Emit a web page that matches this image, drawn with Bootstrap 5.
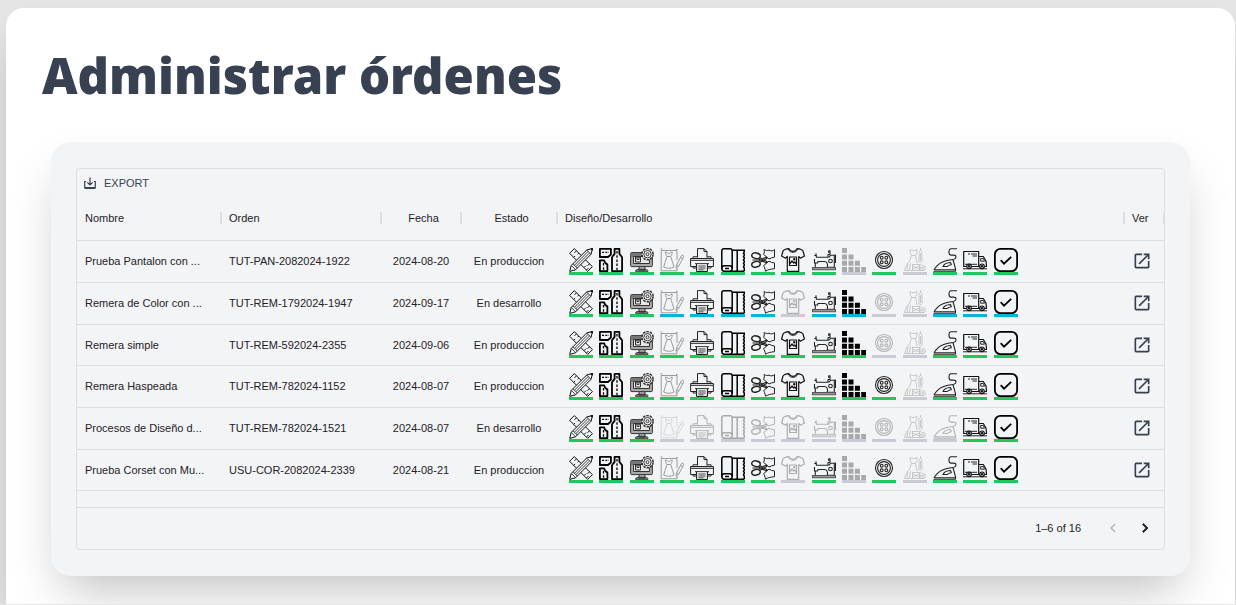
<!DOCTYPE html>
<html lang="es">
<head>
<meta charset="utf-8">
<meta name="viewport" content="width=device-width, initial-scale=1">
<title>Administrar órdenes</title>
<link href="https://cdn.jsdelivr.net/npm/bootstrap@5.3.0/dist/css/bootstrap.min.css" rel="stylesheet">
<style>
  body { background: #e6e6e6; font-family: "Liberation Sans", Arial, sans-serif; }
  .page-panel { background: #fff; border-radius: 18px 18px 0 0; margin: 8px 1px 0 6px; padding: 40px 45px 28px; box-shadow: 0 25px 50px -12px rgba(0,0,0,.25); }
  .page-title { font-family: "Noto Sans", "Open Sans", sans-serif; font-weight: 900; font-size: 49px; line-height: 54px; color: #374151; margin: 0 0 40px -9px; }
  .orders-panel { background: #f3f4f6; border-radius: 20px; padding: 26px 25px; box-shadow: 0 25px 50px -12px rgba(0,0,0,.25); }
  .orders-grid { border: 1px solid #dcdee1; border-radius: 4px; font-size: 11px; line-height: 16px; color: #1f2226; overflow: hidden; }
  .grid-tools { height: 28px; padding: 0 6px; }
  .export-btn { font-size: 11px; line-height: 16px; gap: 7px; }
  .orders-table { width: 100%; table-layout: fixed; border-collapse: collapse; }
  .orders-table th { position: relative; height: 43px; padding: 0 8px; font-weight: 400; border-bottom: 1px solid #dcdee1; }
  .orders-table th::after { content: ""; position: absolute; right: -1px; top: 15px; width: 2px; height: 12px; background: #dcdee1; }
  .orders-table th.text-center { padding-left: 13px; }
  .orders-table td { height: 42px; padding: 0 8px; border-bottom: 1px solid #dcdee1; white-space: nowrap; }
  .orders-table tbody tr:nth-child(3n) td { height: 41px; }
  .col-name { width: 144px; } .col-order { width: 160px; } .col-date { width: 80px; } .col-state { width: 96px; } .col-view { width: 40px; }
  .steps { width: 449px; margin-left: 4px; }
  .step { width: 24px; border-bottom: 3px solid #c9cad3; }
  .step svg { display: block; width: 24px; height: 24px; opacity: .3; }
  .step-done { border-color: #22c55e; } .step-active { border-color: #06b6d4; }
  .step-done svg, .step-active svg { opacity: 1; }
  .plain-btn { border: 0; background: none; padding: 0; color: #374151; }
  .plain-btn svg { display: block; }
  .grid-gap { height: 16px; }
  .grid-foot { height: 42px; border-top: 1px solid #dcdee1; padding-right: 3px; }
  .pager-btn { width: 32px; height: 32px; color: #222; }
  .pager-btn:disabled { color: #b4b6b9; }
</style>
</head>
<body>

<svg class="d-none" aria-hidden="true">
  <defs>
  <symbol id="i-design" viewBox="0 0 24 24"><g fill="#f3f4f6" stroke="#111" stroke-linejoin="round">
    <path d="M5.3.6.6 5.3l18.100 18.100 4.700-4.700z"/><path d="m7.500 2.800-2 2M9.800 5.100 8.600 6.300M4.700 9.400l1.400-1.400M15 19.600l2-2M17.500 22l2-2M20.500 15.800l-2 2"/>
    <path d="M23.600.4 22 6.300 6.600 21.800.7 23.400l1.500-5.900L17.700 2z"/><path d="m2.300 17.400 4.300 4.300M4 15.800l4.300 4.300M17.700 2l4.300 4.300M5.500 17.200 19 3.500M6.900 18.600 20.500 5" stroke-width=".8"/>
    <path d="m21.800.9 1.300 1.300.6-1.900z" fill="#111"/></g></symbol>
  <symbol id="i-pattern" viewBox="0 0 24 24"><g fill="none" stroke="#000" stroke-width="1.8" stroke-linejoin="round">
    <path d="M.9.9h11v5.600L9 9H.9z"/><path d="M.9 12.300h4.300c.2 2.500 1 3.400 3.200 4v6.800H.9z"/><path d="M15.600.9h4.800v5l2.700 3.400v13.800H13V9.300l2.600-3.400z"/>
    <path d="M3 4.300h7" stroke-width="1.300" stroke-dasharray="2 1.300"/><path d="M4.500 15v8M18 3v20" stroke-width="1.300" stroke-dasharray="2.500 1.700"/></g></symbol>
  <symbol id="i-digital" viewBox="0 0 24 24"><g fill="none" stroke="#333">
    <rect x=".6" y="4.600" width="21.800" height="14" rx="1.200" fill="#aaa"/><path d="M1 5.500h12v3H1z" fill="#777" stroke="#777"/><path d="M3.500 8.500h16v7h-16z" fill="#e6e7e9"/><path d="M5.500 9h5v5h-5zM7 9v2.500h2V9"/>
    <path d="M9 19v3h6v-3M5.500 23.300h12.500c0-1.300-1-1.700-2.500-1.700H8c-1.500 0-2.500.4-2.500 1.700z" fill="#999"/>
    <circle cx="17.500" cy="6.200" r="5.600" fill="#f3f4f6" stroke-width="1.500" stroke-dasharray="2.500 1"/><circle cx="17.500" cy="6.200" r="3.700"/><circle cx="17.500" cy="6.200" r="1.500"/></g></symbol>
  <symbol id="i-sketch" viewBox="0 0 24 24"><g fill="none" stroke="#8f9194" stroke-width=".9" stroke-linejoin="round">
    <path d="M17 12V2.500H1.200v20.300H17v-3M.5 1h2M16 1.500h1.500"/><path d="M5.500 4c0 2 .5 3 1.500 4.500C6 12 4.500 15.500 3.700 19c3 1.700 7.300 1.700 10.300 0-.8-3.500-2.300-7-3.300-10.500 1-1.500 1.500-2.500 1.500-4.500l-1.700.5C9.500 6 8 6 7.200 4.500zM7 8.500h3.700"/>
    <path d="m16 20.300.5-3.300 5-9.500c.8-1 2.700 0 2.200 1.300l-5 9.500zM17 17l1.700 1.200M20.500 9.500l2 1.200"/></g></symbol>
  <symbol id="i-print" viewBox="0 0 24 24"><g fill="none" stroke="#222" stroke-linejoin="round">
    <path d="M7.500 9.500V.6H14l3 3v5.900M14 .6v3h3"/><path d="M3 10.500V8.800h4M17 8.800h4v1.700"/><path d="M6 18.500H.6v-8h22.800v8H18M3 18.500v1.500h3M18 20h3v-1.500"/><path d="M1 12.300h22M5 15.700h14"/><path d="M6.500 16v7.500h11V16" fill="#dcdde0"/><path d="M8.500 18h7M8.500 20h7M8.500 21.800h5" stroke="#555"/></g></symbol>
  <symbol id="i-fabric" viewBox="0 0 24 24"><g fill="none" stroke="#000" stroke-width="1.500" stroke-linejoin="round">
    <path d="M.8 21V3C.8 1.500 1.800.8 3 .8h6c1.400 0 2.200.8 2.200 2.200V21"/><rect x=".8" y="17.800" width="10.400" height="5.500" rx="2.500"/><path d="M4 20.500h4"/>
    <path d="M11.500 2.300H24M9 23.300h14.500M16.200 2.300v21M22.500 2.300c2 1.300 0 2 0 3.200 2 1 0 2.300 0 3.400 2 1 0 2.300 0 3.400 2 1 0 2.300 0 3.400 2 1 0 2.300 0 3.400 2 1 0 2.500 1 4.200"/></g></symbol>
  <symbol id="i-cut" viewBox="0 0 24 24"><g fill="none" stroke="#222" stroke-linejoin="round">
    <ellipse cx="5" cy="7.700" rx="4.300" ry="2.800" transform="rotate(12 5 7.700)" stroke-width="1.400"/><ellipse cx="5" cy="16.300" rx="4.300" ry="2.800" transform="rotate(-12 5 16.300)" stroke-width="1.400"/>
    <path d="m8.500 9.500 7.500 4.300-1 1-7-3.500M8.500 14.500l7.500-4.300-1-1-7 3.500M1.500 12H8" stroke-width="1.200"/>
    <path d="M12.500 6.300c1-1.600 1-3 .5-4.800 2 1.200 3.500 1.300 5 .7 2.200 1 4 1 5.500-.7v7.700c-2 .3-3.700.8-5.500 1.800z"/><path d="M12.500 17.700c1 1.300 1.500 2.700 2 5.500 2.500-1.500 4.500-2 9-2.500V15c-2-.3-3.700-.8-5.500-1.800z"/></g></symbol>
  <symbol id="i-shirt" viewBox="0 0 24 24"><g fill="none" stroke="#111" stroke-width="1.200" stroke-linejoin="round">
    <path d="M8 .7C5 1 3 1.500 2 3L.6 8l4 2.200 1.700-1.700v14.900h11.400V8.500l1.700 1.700 4-2.200L22 3c-1-1.500-3-2-6-2.300-1.500 3.500-6.500 3.500-8 0z"/><path d="M7 1c2 4.700 8 4.700 10 0" stroke-width=".7"/>
    <path d="M8.500 9h7v8.500h-7zM8.500 16l2.500-3 1.700 2 1-1 1.700 2"/><circle cx="13.200" cy="11.200" r=".6"/></g></symbol>
  <symbol id="i-sew" viewBox="0 0 24 24"><g fill="none" stroke="#222" stroke-width="1.100" stroke-linejoin="round">
    <path d="M2.300 7.500h2v1.700h11.500c1.500 0 2-1 3-2h3.500v12h-7c.7-3.500-.3-5.700-3-5.700H6l-.5 1.500h-3V11M3.300 15v4"/><path d="M16 9V6.500h2V2.700h-1.300V5M4 7.500V5.300"/><circle cx="18.500" cy="13" r="1.800"/><path d="M22.500 7h1v8"/><path d="M.5 19.500h23v2.300H.5z" fill="#999" stroke="#555"/></g></symbol>
  <symbol id="i-stack" viewBox="0 0 24 24"><path d="M0 0h5v5H0zM0 6.500h5v5H0zM6.500 6.500h5v5h-5zM0 12.800h5v5H0zM6.500 12.800h5v5h-5zM12.900 12.800h5v5h-5zM0 19h5v5H0zM6.500 19h5v5h-5zM12.900 19h5v5h-5zM19.200 19h4.800v5h-4.800z" fill="#000"/></symbol>
  <symbol id="i-button" viewBox="0 0 24 24"><g fill="none" stroke="#222" stroke-width="1.100"><circle cx="12" cy="12" r="8.500"/><circle cx="12" cy="12" r="6.400"/><circle cx="9.700" cy="9.700" r="1.400"/><circle cx="14.300" cy="9.700" r="1.400"/><circle cx="9.700" cy="14.300" r="1.400"/><circle cx="14.300" cy="14.300" r="1.400"/></g></symbol>
  <symbol id="i-dress" viewBox="0 0 24 24"><g fill="none" stroke="#444" stroke-width=".8" stroke-linejoin="round">
    <path d="M7 1.500c2 1.500 5 1.500 7 0l-.3 3.300-1.200 2.700 1.700 8M7 1.500l.3 3.300 1.200 2.700-2 6M8.500 7.500h4"/>
    <path d="M6.500 13 3.500 17l-2 5.500h9M5 16l-1 6M7.500 15l-1 7"/><path d="M16 5.500c0-2 .6-3 1.500-3s1.500 1 1.500 3v8c0 1.500-3 1.500-3 0zM17.500 2.500V0M17.500 5v8"/><path d="M9 16.500h9M9 22.500h12M9.500 16.500v6M16.500 16.500v6M9.500 18l7 3M9.500 21l7-3"/><circle cx="20" cy="20" r="2.500"/><circle cx="20" cy="20" r=".8"/></g></symbol>
  <symbol id="i-iron" viewBox="0 0 24 24"><g fill="none" stroke="#222" stroke-width="1.100" stroke-linejoin="round">
    <path d="M.5 23.300h22M1 21.800c1-1.800 2-3 3.500-4.500 3.500-3.500 8-5 15.500-5.800l2.500 9.300v2.500M1 21.800h21.500"/><path d="M10 18.500c1-2.500 3-3.700 7.500-4l.8 2.200c-2 .2-3.300.8-4 1.800z"/><path d="M20.500 11.500c1.700-.5 2.500-1.200 2.500-2.500s-1-1.900-2.500-1.900H18c-2.700 0-2.700-6.400 0-6.400h6"/></g></symbol>
  <symbol id="i-truck" viewBox="0 0 24 24"><g fill="none" stroke="#111" stroke-width="1.200" stroke-linejoin="round">
    <path d="M3.500 18.500H.7V3.500h15v15H8.500M15.700 8.500h4.600l2.700 4.500.5 5.500h-2M15.700 18.500h1"/><path d="M17.700 10.500h2.600l1.200 2.700h-3.800z" stroke-width=".9"/><circle cx="6" cy="18.300" r="2.300"/><circle cx="6" cy="18.300" r=".6"/><circle cx="19" cy="18.300" r="2.300"/><circle cx="19" cy="18.300" r=".6"/><path d="M0 20.800h24M2 16.300h12M5 6h2M8 6h6M9.500 8H14" stroke-width=".9"/></g></symbol>
  <symbol id="i-check" viewBox="0 0 24 24"><g fill="none" stroke="#000" stroke-width="1.800"><rect x=".9" y=".9" width="22.200" height="22.200" rx="5.500"/><path d="m6.700 12.200 3.300 3.500 7.200-6.900"/></g></symbol>
  <symbol id="i-open" viewBox="0 0 24 24"><path fill="currentColor" d="M19 19H5V5h7V3H5a2 2 0 0 0-2 2v14a2 2 0 0 0 2 2h14c1.100 0 2-.9 2-2v-7h-2zM14 3v2h3.600l-9.800 9.800 1.400 1.400L19 6.400V10h2V3z"/></symbol>
  </defs>
</svg>

<main class="page-panel">
  <h1 class="page-title">Administrar órdenes</h1>

  <section class="orders-panel">
    <div class="orders-grid">
      <div class="grid-tools d-flex align-items-center">
        <button type="button" class="plain-btn export-btn d-flex align-items-center">
          <svg width="14" height="14" viewBox="0 0 14 14" fill="none" stroke="currentColor" stroke-width="1.200"><path d="M3 5.500H1.700v6c0 .7.400 1 1 1h8.600c.6 0 1-.3 1-1v-6H11M7 1.500v7.300M4.300 6.300 7 9l2.700-2.700M2 11.500h10"/></svg>
          EXPORT
        </button>
      </div>

      <table class="orders-table">
        <colgroup><col class="col-name"><col class="col-order"><col class="col-date"><col class="col-state"><col><col class="col-view"></colgroup>
        <thead>
          <tr><th scope="col">Nombre</th><th scope="col">Orden</th><th scope="col" class="text-center">Fecha</th><th scope="col" class="text-center">Estado</th><th scope="col">Diseño/Desarrollo</th><th scope="col">Ver</th></tr>
        </thead>
        <tbody id="orders"></tbody>
      </table>

      <div class="grid-gap"></div>
      <div class="grid-foot d-flex align-items-center justify-content-end">
        <span class="me-3">1–6 of 16</span>
        <button type="button" class="plain-btn pager-btn d-flex align-items-center justify-content-center" aria-label="Página anterior" disabled><svg width="18" height="18" viewBox="0 0 24 24"><path fill="currentColor" d="M15.400 7.400 14 6l-6 6 6 6 1.400-1.400-4.600-4.600z"/></svg></button>
        <button type="button" class="plain-btn pager-btn d-flex align-items-center justify-content-center" aria-label="Página siguiente"><svg width="18" height="18" viewBox="0 0 24 24"><path fill="currentColor" stroke="currentColor" d="M10 6 8.600 7.400l4.600 4.600-4.600 4.600L10 18l6-6z"/></svg></button>
      </div>
    </div>
  </section>
</main>

<script src="https://cdn.jsdelivr.net/npm/bootstrap@5.3.0/dist/js/bootstrap.bundle.min.js"></script>
<script>
  const icons = ['design','pattern','digital','sketch','print','fabric','cut','shirt','sew','stack','button','dress','iron','truck','check'];
  // One letter per step: d = done, a = active, n = not needed
  const orders = [
    ['Prueba Pantalon con ...', 'TUT-PAN-2082024-1922', '2024-08-20', 'En produccion', 'dddddddddndnddd'],
    ['Remera de Color con ...', 'TUT-REM-1792024-1947', '2024-09-17', 'En desarrollo', 'dddaaaanaannaaa'],
    ['Remera simple', 'TUT-REM-592024-2355', '2024-09-06', 'En produccion', 'ddddddddddnnddd'],
    ['Remera Haspeada', 'TUT-REM-782024-1152', '2024-08-07', 'En produccion', 'dddddddddddnddd'],
    ['Procesos de Diseño d...', 'TUT-REM-782024-1521', '2024-08-07', 'En desarrollo', 'dddnnnnnnnnnndd'],
    ['Prueba Corset con Mu...', 'USU-COR-2082024-2339', '2024-08-21', 'En produccion', 'dddddddndndnddd']
  ];
  const stateClass = { d: 'step-done', a: 'step-active', n: '' };
  document.getElementById('orders').innerHTML = orders.map(([name, code, date, state, steps]) => `
    <tr>
      <td>${name}</td><td>${code}</td><td class="text-center">${date}</td><td class="text-center">${state}</td>
      <td><div class="steps d-flex justify-content-between">${icons.map((icon, i) =>
        `<span class="step ${stateClass[steps[i]]}"><svg aria-hidden="true"><use href="#i-${icon}"/></svg></span>`).join('')}</div></td>
      <td><button type="button" class="plain-btn d-block" aria-label="Ver ${code}"><svg width="20" height="20"><use href="#i-open"/></svg></button></td>
    </tr>`).join('');
</script>
</body>
</html>
